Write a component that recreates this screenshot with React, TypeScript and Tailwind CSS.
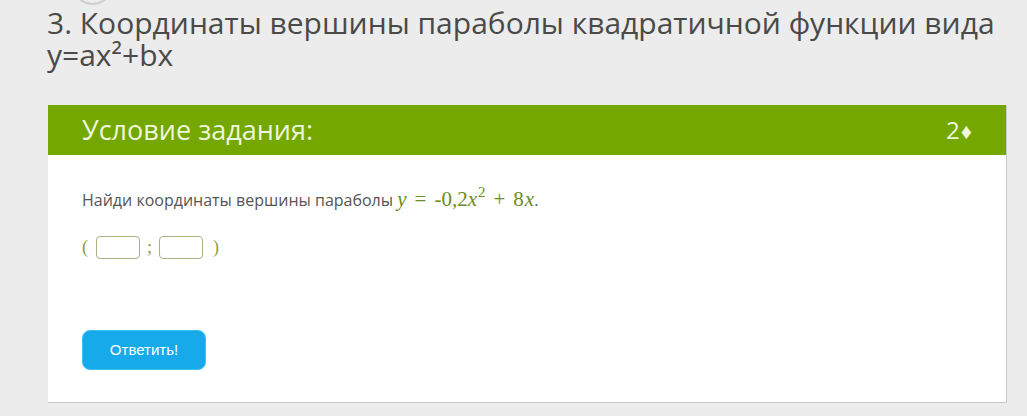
import React from "react";

const mathColor = "text-[#6b8c22]";

function MathExpr() {
  return (
    <span
      className={`${mathColor} text-[21px] leading-none`}
      style={{ fontFamily: '"Liberation Serif", "DejaVu Serif", serif' }}
    >
      <i>y</i>
      <span className="mx-[8px]">=</span>
      <span>-0,2</span>
      <i>x</i>
      <sup className="text-[15px] top-[-9px] ml-[1px]">2</sup>
      <span className="mx-[8px]">+</span>
      <span>8</span>
      <i className="ml-[1px]">x</i>
    </span>
  );
}

function AnswerBox() {
  return (
    <span className="inline-block w-[44px] h-[23px] rounded-[4px] border border-[#a6b384] bg-white" />
  );
}

export default function App() {
  return (
    <div
      className="relative w-full h-[416px] overflow-hidden bg-[#ececec]"
      style={{ fontFamily: '"Open Sans", "Noto Sans", sans-serif' }}
    >
      {/* decorative circle cut off at the top */}
      <div className="absolute left-[72px] top-[-36px] w-[41px] h-[41px] rounded-full border-2 border-[#cfcfcf]" />

      <h1 className="pl-[47px] pr-[20px] pt-[7px] text-[30px] leading-[32px] text-[#4a4a48] font-normal">
        3. Координаты вершины параболы квадратичной функции вида y=ax²+bx
      </h1>

      <div className="ml-[48px] mt-[34px] w-[959px] bg-white border-r border-b border-[#c9c9c9]">
        <div className="h-[50px] bg-[#74a700] px-[34px] flex items-center justify-between text-[#eef6dc]">
          <span className="text-[27px]">Условие задания:</span>
          <span className="text-[24px] flex items-center">
            2<span className="text-[22px] leading-none ml-[1px]">♦</span>
          </span>
        </div>

        <div className="px-[34px] pt-[33px] pb-[32px]">
          <p className="text-[16px] leading-[24px] text-[#555555] h-[24px]">
            Найди координаты вершины параболы <MathExpr />.
          </p>

          <div
            className="mt-[24px] flex items-center h-[23px] text-[#86a044] text-[18px]"
            style={{ fontFamily: '"Liberation Serif", serif' }}
          >
            <span className="mr-[8px]">(</span>
            <AnswerBox />
            <span className="mx-[7px]">;</span>
            <AnswerBox />
            <span className="ml-[10px]">)</span>
          </div>

          <button
            className="mt-[71px] w-[124px] h-[40px] rounded-[8px] bg-[#16aaea] border border-[#3cc3f6] text-white text-[15px]"
            style={{ fontFamily: '"Liberation Sans", Arial, sans-serif' }}
          >
            Ответить!
          </button>
        </div>
      </div>
    </div>
  );
}
